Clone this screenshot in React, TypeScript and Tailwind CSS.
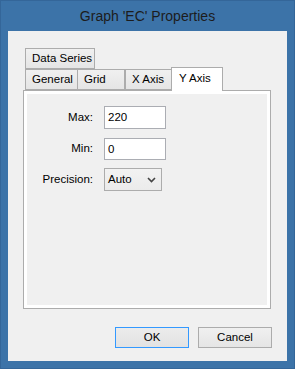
import React from "react";

const font = { fontFamily: '"Liberation Sans", Arial, sans-serif' };

function Tab({ label, className }: { label: string; className: string }) {
  return (
    <div
      className={`h-[21px] border border-[#acacac] bg-gradient-to-b from-[#f0f0f0] to-[#e5e5e5] text-[11.5px] text-black leading-[19px] pl-[6px] whitespace-nowrap overflow-hidden ${className}`}
    >
      {label}
    </div>
  );
}

export default function App() {
  return (
    <div
      className="w-[295px] h-[369px] bg-[#3c73a8] border border-[#346699] flex flex-col px-[7px] pb-[7px]"
      style={font}
    >
      <div className="h-[30px] flex items-center justify-center text-[14px] text-[#1c1c1c] pt-[1px]">
        Graph 'EC' Properties
      </div>
      <div className="flex-1 bg-[#f0f0f0] flex flex-col pl-[15px] pt-[17px]">
        {/* tab rows */}
        <div className="pl-[2px] flex">
          <Tab label="Data Series" className="w-[70px]" />
        </div>
        <div className="pl-[2px] flex items-end -mt-[1px] h-[22px]">
          <Tab label="General" className="w-[53px]" />
          <Tab label="Grid" className="w-[48px] -ml-[1px]" />
          <Tab label="X Axis" className="w-[47px]" />
          <div className="w-[52px] h-[24px] -ml-[1px] border border-b-0 border-[#acacac] bg-white text-[11.5px] text-black pl-[7px] leading-[20px] relative z-10 -mb-[1px]">
            Y Axis
          </div>
        </div>
        {/* panel */}
        <div className="w-[248px] h-[219px] border border-[#acacac] bg-white p-[3px] flex">
          <div className="flex-1 h-full bg-[#f0f0f0] flex flex-col pt-[12px] text-[11.5px]">
            <div className="flex items-center h-[23px]">
              <div className="w-[66px] text-right text-black">Max:</div>
              <div className="ml-[11px] w-[62px] h-[23px] border border-[#abadb3] bg-white text-black pl-[3px] leading-[21px]">
                220
              </div>
            </div>
            <div className="flex items-center h-[22px] mt-[9px]">
              <div className="w-[66px] text-right text-black">Min:</div>
              <div className="ml-[11px] w-[62px] h-[22px] border border-[#abadb3] bg-white text-black pl-[3px] leading-[20px]">
                0
              </div>
            </div>
            <div className="flex items-center h-[23px] mt-[8px]">
              <div className="w-[66px] text-right text-black">Precision:</div>
              <div className="ml-[11px] w-[58px] h-[23px] border border-[#acacac] bg-gradient-to-b from-[#f2f2f2] to-[#ebebeb] text-black pl-[3px] flex items-center justify-between pr-[5px]">
                <span>Auto</span>
                <svg width="9" height="6" viewBox="0 0 9 6">
                  <path d="M1 1 L4.5 4.5 L8 1" stroke="#444" strokeWidth="1.6" fill="none" />
                </svg>
              </div>
            </div>
          </div>
        </div>
        {/* buttons */}
        <div className="flex pl-[92px] mt-[18px] gap-[9px] text-[11.5px]">
          <div className="w-[74px] h-[21px] border border-[#3399ff] bg-gradient-to-b from-[#ececec] to-[#e2e2e2] text-black flex items-center justify-center">
            OK
          </div>
          <div className="w-[74px] h-[21px] border border-[#acacac] bg-gradient-to-b from-[#f0f0f0] to-[#e5e5e5] text-black flex items-center justify-center">
            Cancel
          </div>
        </div>
      </div>
    </div>
  );
}
